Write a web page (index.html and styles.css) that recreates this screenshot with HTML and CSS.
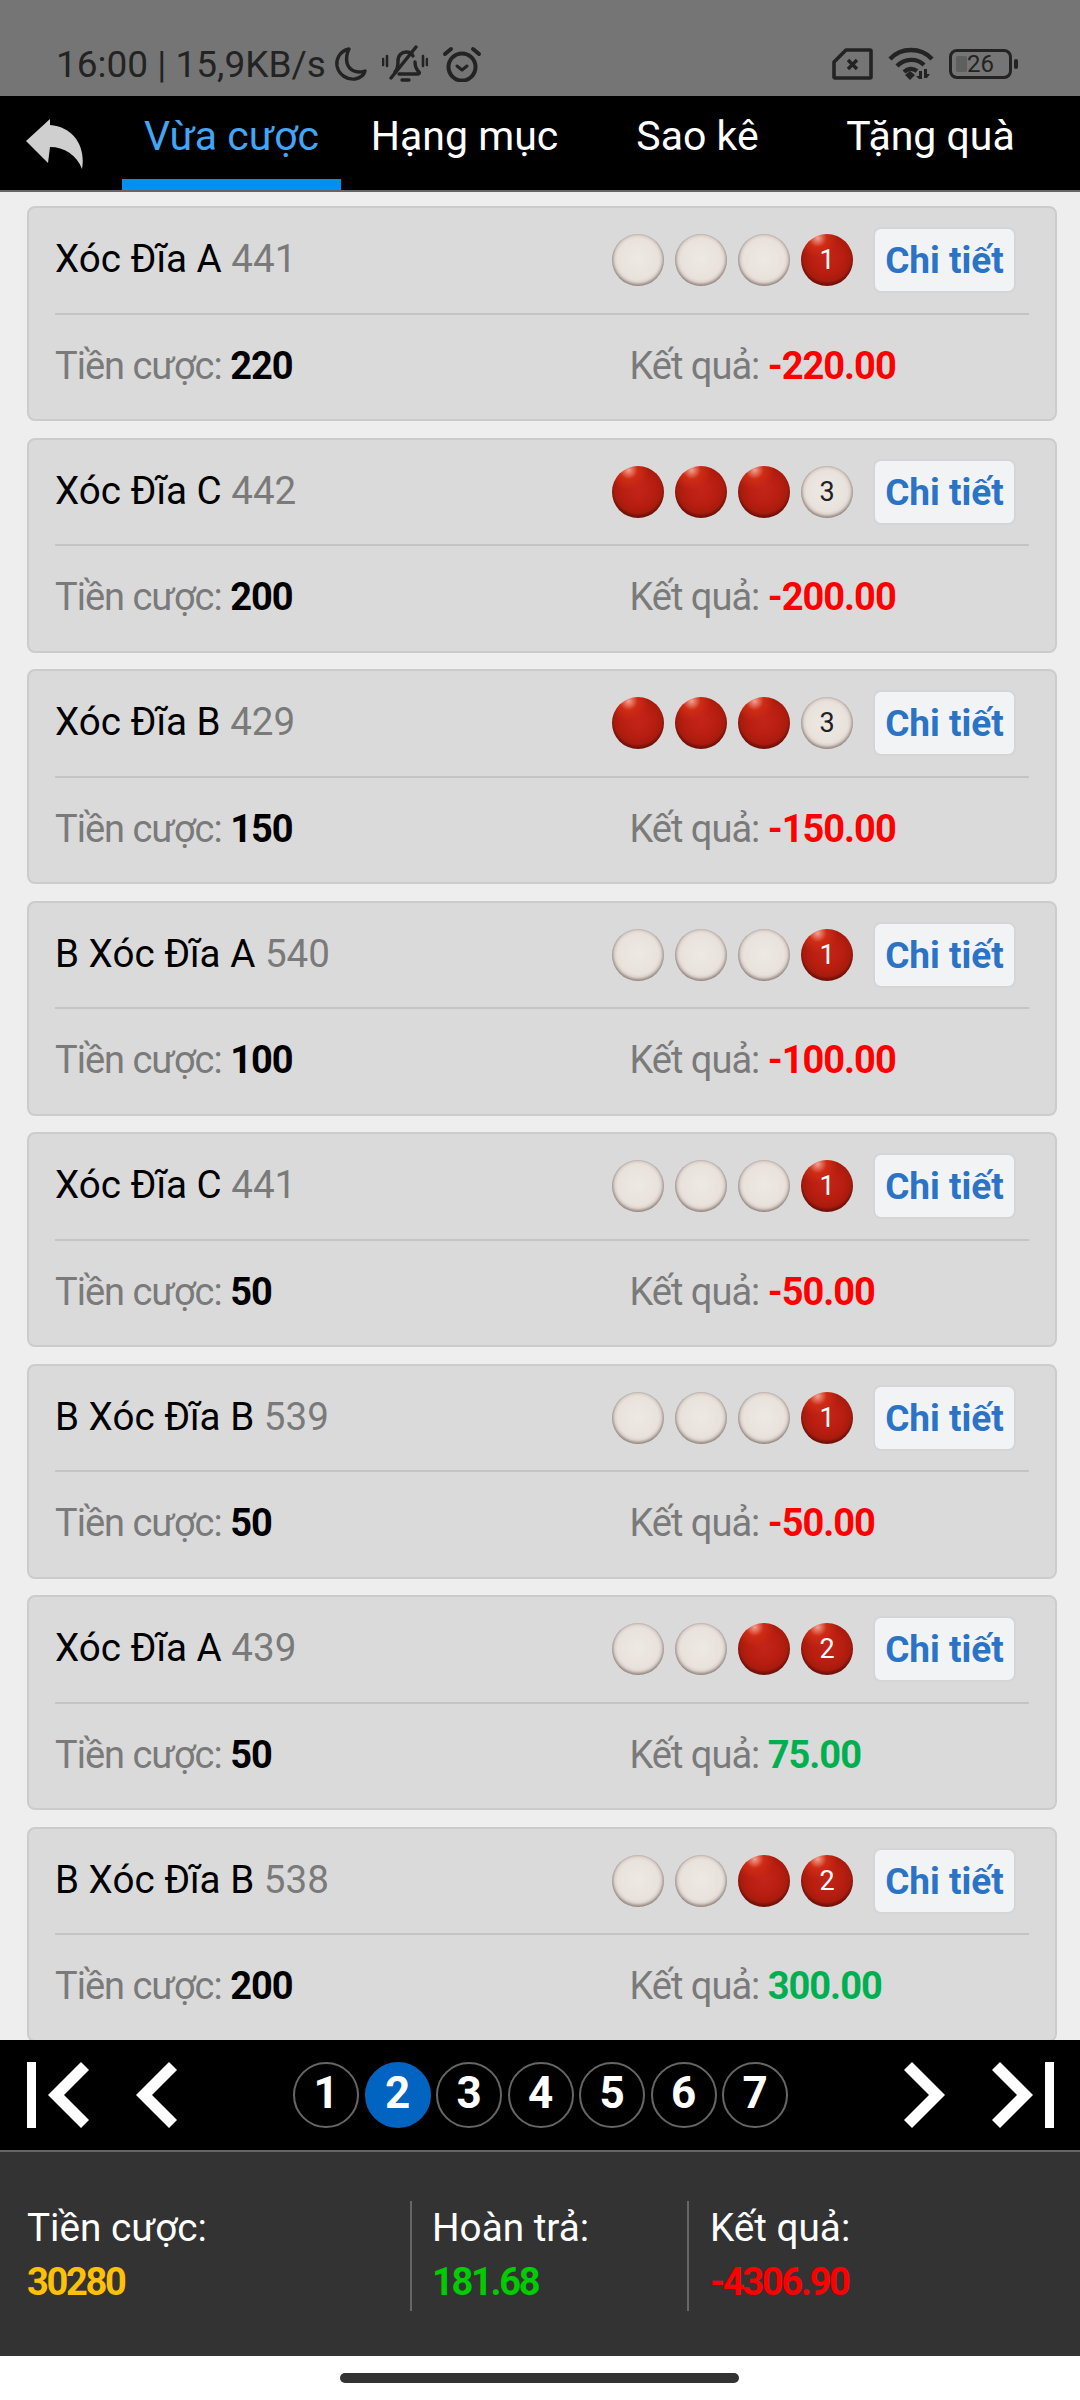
FILE: index.html
```html
<!DOCTYPE html>
<html lang="vi">
<head>
    <meta charset="UTF-8">
    <meta name="viewport" content="width=device-width, initial-scale=1.0">
    <title>Vừa cược</title>
    <link rel="stylesheet" href="styles.css">
</head>
<body>
<div class="app">
    <!-- status bar -->
    <div class="status">
        <span class="status-text">16:00 | 15,9KB/s</span>
        <svg class="ic-moon" width="34" height="36" viewBox="0 0 34 36"><path d="M15 3C5 5 2 14 3 20c2 9 10 14 18 13 5-1 9-4 10-8-9 3-16-1-18-8-1-5 0-10 2-14z" fill="none" stroke="#232323" stroke-width="3.4" stroke-linejoin="round"/></svg>
        <svg class="ic-bell" width="46" height="38" viewBox="0 0 46 38"><g fill="none" stroke="#232323" stroke-linecap="round"><path d="M13 27c3-3 3-7 3-11 0-6 4-9 8-9 3 0 6 1 7 4M33 17c0 4 1 7 4 10 1 1 0 2-1 2H17" stroke-width="3.4"/><path d="M9 33 34 2" stroke-width="3.4"/><path d="M1 14v6M5 11v10M41 11v10M45 14v6" stroke-width="2.6"/><path d="M20 35h7" stroke-width="3.4"/></g></svg>
        <svg class="ic-alarm" width="40" height="36" viewBox="0 0 40 36"><g fill="none" stroke="#232323" stroke-linecap="round" stroke-linejoin="round"><circle cx="20" cy="21" r="13.5" stroke-width="4"/><path d="M3 8 9 3M37 8 31 3" stroke-width="4"/><path d="M15 20l5 4 5-4" stroke-width="3"/></g></svg>
        <div class="status-right">
            <svg width="41" height="32" viewBox="0 0 41 32"><g fill="none" stroke="#232323" stroke-linejoin="round"><path d="M14 2h24a1 1 0 0 1 1 1v26a1 1 0 0 1-1 1H3a1 1 0 0 1-1-1V14z" stroke-width="3.6"/><path d="M16 12l9 9M25 12l-9 9" stroke-width="3.4"/></g></svg>
            <svg width="46" height="34" viewBox="0 0 46 34"><g fill="none" stroke="#232323" stroke-width="4.4"><path d="M2 12C13 0 33 0 44 12"/><path d="M9 19C17 11 29 11 36 18"/><path d="M16 25c4-4 9-4 13-1"/></g><path d="M17 28l5-4 5 4-5 5z" fill="#232323"/><path d="M31 24h3v8h-3l-3-3h3zM36 22h3v5h3l-3 4h-3z" fill="#232323"/></svg>
            <div class="battery"><span class="battery-level"></span><span class="battery-num">26</span></div>
            <span class="battery-nub"></span>
        </div>
    </div>

    <!-- top nav -->
    <div class="nav">
        <div class="back">
            <svg width="58" height="50" viewBox="0 0 58 50"><path d="M24 0 0 22l22 22 2-16c14 0 27 8 32 22 4-22-8-42-32-44z" fill="#cfcfcf"/></svg>
        </div>
        <div class="tab active">Vừa cược</div>
        <div class="tab">Hạng mục</div>
        <div class="tab">Sao kê</div>
        <div class="tab">Tặng quà</div>
    </div>

    <!-- bet list -->
    <div class="list">
        <div class="card">
            <div class="card-top">
                <div class="title">Xóc Đĩa A <span class="round">441</span></div>
                <div class="chips"><span class="chip"></span><span class="chip"></span><span class="chip"></span><span class="chip red">1</span></div>
                <div class="btn">Chi tiết</div>
            </div>
            <div class="card-bottom">
                <div class="stake">Tiền cược: <b>220</b></div>
                <div>Kết quả: <b class="loss">-220.00</b></div>
            </div>
        </div>
        <div class="card">
            <div class="card-top">
                <div class="title">Xóc Đĩa C <span class="round">442</span></div>
                <div class="chips"><span class="chip red"></span><span class="chip red"></span><span class="chip red"></span><span class="chip">3</span></div>
                <div class="btn">Chi tiết</div>
            </div>
            <div class="card-bottom">
                <div class="stake">Tiền cược: <b>200</b></div>
                <div>Kết quả: <b class="loss">-200.00</b></div>
            </div>
        </div>
        <div class="card">
            <div class="card-top">
                <div class="title">Xóc Đĩa B <span class="round">429</span></div>
                <div class="chips"><span class="chip red"></span><span class="chip red"></span><span class="chip red"></span><span class="chip">3</span></div>
                <div class="btn">Chi tiết</div>
            </div>
            <div class="card-bottom">
                <div class="stake">Tiền cược: <b>150</b></div>
                <div>Kết quả: <b class="loss">-150.00</b></div>
            </div>
        </div>
        <div class="card">
            <div class="card-top">
                <div class="title">B Xóc Đĩa A <span class="round">540</span></div>
                <div class="chips"><span class="chip"></span><span class="chip"></span><span class="chip"></span><span class="chip red">1</span></div>
                <div class="btn">Chi tiết</div>
            </div>
            <div class="card-bottom">
                <div class="stake">Tiền cược: <b>100</b></div>
                <div>Kết quả: <b class="loss">-100.00</b></div>
            </div>
        </div>
        <div class="card">
            <div class="card-top">
                <div class="title">Xóc Đĩa C <span class="round">441</span></div>
                <div class="chips"><span class="chip"></span><span class="chip"></span><span class="chip"></span><span class="chip red">1</span></div>
                <div class="btn">Chi tiết</div>
            </div>
            <div class="card-bottom">
                <div class="stake">Tiền cược: <b>50</b></div>
                <div>Kết quả: <b class="loss">-50.00</b></div>
            </div>
        </div>
        <div class="card">
            <div class="card-top">
                <div class="title">B Xóc Đĩa B <span class="round">539</span></div>
                <div class="chips"><span class="chip"></span><span class="chip"></span><span class="chip"></span><span class="chip red">1</span></div>
                <div class="btn">Chi tiết</div>
            </div>
            <div class="card-bottom">
                <div class="stake">Tiền cược: <b>50</b></div>
                <div>Kết quả: <b class="loss">-50.00</b></div>
            </div>
        </div>
        <div class="card">
            <div class="card-top">
                <div class="title">Xóc Đĩa A <span class="round">439</span></div>
                <div class="chips"><span class="chip"></span><span class="chip"></span><span class="chip red"></span><span class="chip red">2</span></div>
                <div class="btn">Chi tiết</div>
            </div>
            <div class="card-bottom">
                <div class="stake">Tiền cược: <b>50</b></div>
                <div>Kết quả: <b class="win">75.00</b></div>
            </div>
        </div>
        <div class="card">
            <div class="card-top">
                <div class="title">B Xóc Đĩa B <span class="round">538</span></div>
                <div class="chips"><span class="chip"></span><span class="chip"></span><span class="chip red"></span><span class="chip red">2</span></div>
                <div class="btn">Chi tiết</div>
            </div>
            <div class="card-bottom">
                <div class="stake">Tiền cược: <b>200</b></div>
                <div>Kết quả: <b class="win">300.00</b></div>
            </div>
        </div>
    </div>

    <!-- pager -->
    <div class="pager">
        <div class="pager-arrows">
            <svg width="62" height="68" viewBox="0 0 62 68"><path d="M0 1h9v66H0zM21 34 54 1l8 8-25 25 25 25-8 8z" fill="#fff"/></svg>
            <svg width="41" height="68" viewBox="0 0 41 68"><path d="M0 34 33 1l8 8-25 25 25 25-8 8z" fill="#fff"/></svg>
        </div>
        <div class="pages">
            <span class="page">1</span>
            <span class="page current">2</span>
            <span class="page">3</span>
            <span class="page">4</span>
            <span class="page">5</span>
            <span class="page">6</span>
            <span class="page">7</span>
        </div>
        <div class="pager-arrows">
            <svg width="41" height="68" viewBox="0 0 41 68"><path d="M41 34 8 1 0 9l25 25L0 59l8 8z" fill="#fff"/></svg>
            <svg width="62" height="68" viewBox="0 0 62 68"><path d="M53 1h9v66h-9zM41 34 8 1 0 9l25 25L0 59l8 8z" fill="#fff"/></svg>
        </div>
    </div>

    <!-- totals -->
    <div class="totals">
        <div class="total first">
            <div class="total-label">Tiền cược:</div>
            <div class="total-value yellow">30280</div>
        </div>
        <div class="total second">
            <div class="total-label">Hoàn trả:</div>
            <div class="total-value green">181.68</div>
        </div>
        <div class="total">
            <div class="total-label">Kết quả:</div>
            <div class="total-value red-text">-4306.90</div>
        </div>
    </div>

    <div class="home"><span class="home-bar"></span></div>
</div>
</body>
</html>
```

FILE: styles.css
```css
* { box-sizing: border-box; }
html, body { margin: 0; padding: 0; }
body { font-family: Roboto, "Noto Sans", sans-serif; background: #fff; }
.app { width: 1080px; height: 2400px; display: flex; flex-direction: column; overflow: hidden; }

/* status bar */
.status { height: 96px; flex: none; background: #757575; color: #232323; display: flex; align-items: center; padding: 32px 62px 0 56px; }
.status-text { font-size: 37px; width: 278px; white-space: nowrap; }
.ic-bell { margin-left: 14px; }
.ic-alarm { margin-left: 14px; }
.status-right { margin-left: auto; display: flex; align-items: center; gap: 15px; }
.battery { width: 63px; height: 30px; border: 3px solid #232323; border-radius: 8px; position: relative; display: flex; align-items: center; justify-content: center; font-size: 24px; }
.battery-level { position: absolute; left: 4px; top: 4px; bottom: 4px; width: 11px; background: #5f5f5f; border-radius: 2px; }
.battery-num { position: relative; }
.battery-nub { width: 4px; height: 10px; background: #232323; border-radius: 2px; margin-left: -13px; }

/* nav */
.nav { height: 96px; flex: none; background: #000; border-bottom: 2px solid #666; display: flex; padding-right: 33px; }
.back { width: 115px; padding: 23px 0 0 26px; }
.tab { width: 233px; color: #fff; font-size: 41px; text-align: center; line-height: 80px; margin: 0 7px; flex: 1; }
.tab.active { color: #42a5f5; border-bottom: 11px solid #0090f0; height: 94px; }

/* list */
.list { flex: none; height: 1848px; background: #eee; padding: 14.2px 23px 0 27px; overflow: hidden; }
.card { height: 215px; margin-bottom: 16.5px; background: #dadada; border: 2px solid #ccc; border-radius: 8px; padding: 0 26px; }
.card-top { height: 106.5px; border-bottom: 2px solid #c4c4c4; display: flex; align-items: center; padding-right: 13px; }
.title { font-size: 38.6px; color: #000; flex: 1; margin-top: -3px; }
.round { color: #7a7a7a; }
.chips { display: flex; gap: 11px; margin-right: 20px; }
.chip { width: 52px; height: 52px; border-radius: 50%; display: flex; align-items: center; justify-content: center; font-size: 27px; color: #222;
    background: radial-gradient(circle 27px at 50% 48%, #eee9e4 0%, #e9e2dc 76%, #ddd3cd 86%, #b5a9a4 93%, #8d807b 100%); }
.chip.red { color: #fff; background: radial-gradient(circle 20px at 32% 8%, #f3a090 0%, #cf2c15 45%, rgba(207, 44, 21, 0) 100%), radial-gradient(circle 27px at 50% 45%, #c4241a 0%, #b81e10 60%, #a81b0d 88%, #74110a 100%); }
.btn { width: 143px; height: 66px; background: #f1f3f5; border: 2px solid #d5d5d5; border-radius: 8px; color: #2b73c5; font-size: 37px; font-weight: 700; text-align: center; line-height: 64px; }
.card-bottom { display: flex; align-items: center; height: 102px; font-size: 38px; letter-spacing: -1px; color: #7a7a7a; }
.stake { width: 574.5px; }
.card-bottom b { font-weight: 700; color: #000; }
.card-bottom .loss { color: #f00; }
.card-bottom .win { color: #00b050; }

/* pager */
.pager { height: 112px; flex: none; background: #000; border-bottom: 2px solid #666; display: flex; align-items: center; justify-content: space-between; padding: 0 26px 0 27px; }
.pager-arrows { display: flex; align-items: center; gap: 47px; }
.pages { display: flex; gap: 5.5px; }
.page { width: 66px; height: 66px; border: 2px solid #666; border-radius: 50%; color: #fff; font-size: 44px; font-weight: 700; display: flex; align-items: center; justify-content: center; padding-bottom: 5px; }
.page.current { background: #0064c0; border-color: #0064c0; }

/* totals */
.totals { flex: none; height: 204px; background: #333; padding: 49px 0 0 27px; display: flex; align-items: flex-start; }
.total { height: 110px; }
.total.first { width: 383px; }
.total.second { width: 277px; border-left: 2px solid #666; padding-left: 20px; }
.total.second + .total { border-left: 2px solid #666; padding-left: 21px; }
.total-label { color: #fff; font-size: 38.7px; line-height: 54px; }
.total-value { font-size: 38px; font-weight: 700; letter-spacing: -2.3px; line-height: 54px; }
.yellow { color: #ffc107; }
.green { color: #0c0; }
.red-text { color: #f00; }

.home { flex: none; height: 44px; display: flex; justify-content: center; padding: 17px 2px 0 0; }
.home-bar { width: 399px; height: 10px; background: #333; border-radius: 5px; }
```
